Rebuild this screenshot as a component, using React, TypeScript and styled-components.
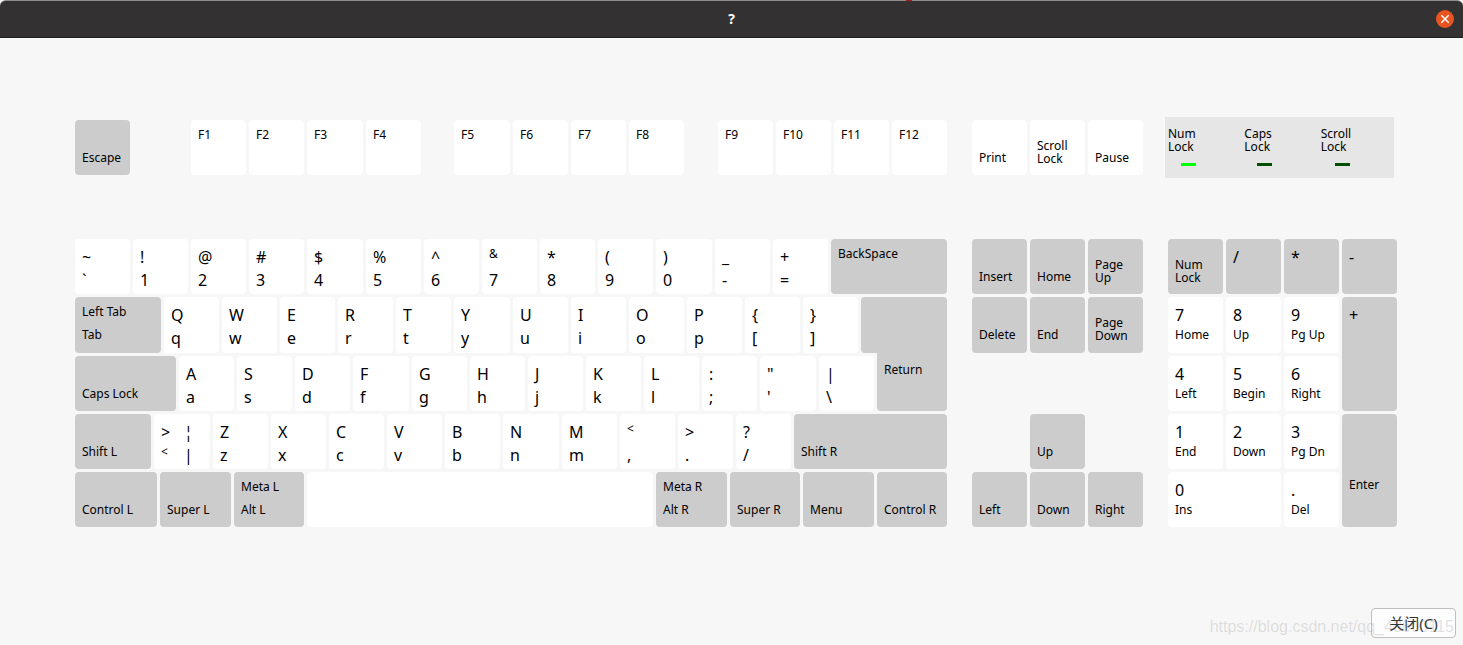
import React from "react";
import styled, { createGlobalStyle } from "styled-components";

const GlobalStyle = createGlobalStyle`
  *, *::before, *::after { box-sizing: border-box; }
  html, body, #root { height: 100%; }
  body { margin: 0; background: #f7f7f7; color: #000; font-family: "Noto Sans", "Noto Sans CJK SC", sans-serif; }
`;

type Size = "small" | "large";
type Legend = { text: string; size?: Size };
type KeyDef = {
  id: string;
  span?: number;
  tone?: "plain" | "dark";
  upper?: Legend;
  lower?: Legend;
  altUpper?: Legend;
  altLower?: Legend;
  stacked?: string;
  gap?: boolean;
  area?: string;
  deep?: boolean;
  part?: "returnTop" | "returnBottom";
};

const Window = styled.div`
  min-height: 100%;
  display: flex;
  flex-direction: column;
`;

const TitleBar = styled.header`
  position: relative;
  display: grid;
  grid-template-columns: 1fr auto 1fr;
  align-items: center;
  height: 38px;
  padding: 0 9px;
  background: #333132;
  border-top: 1px solid #8e8e8e;
  border-bottom: 1px solid #222;
  border-radius: 6px 6px 0 0;

  &::after {
    content: "";
    position: absolute;
    top: -1px;
    left: 61.9%;
    width: 6px;
    height: 1px;
    background: #a81c1c;
  }
`;

const Title = styled.h1`
  grid-column: 2;
  margin: 0;
  font-size: 14px;
  line-height: 18px;
  font-weight: 700;
  color: #fff;
`;

const CloseIcon = styled.button`
  justify-self: end;
  width: 18px;
  height: 18px;
  padding: 0;
  border: 0;
  border-radius: 50%;
  background: #e95420;

  svg { display: block; }
`;

const Board = styled.main`
  flex: 1;
  display: grid;
  grid-template-columns: 872fr 171fr 229fr;
  column-gap: 25px;
  row-gap: 61px;
  align-content: start;
  padding: 79px 66px 58px 75px;
`;

const Row = styled.div<{ $tracks: string }>`
  display: grid;
  grid-template-columns: ${(p) => p.$tracks};
  gap: 3px;
`;

const TopRow = styled(Row)`
  height: 55px;
  margin: 3px 0;
`;

const Rows = styled.div`
  display: grid;
  grid-template-rows: 55px 56px 55px 55px 55px;
  gap: 3px;
`;

const NavGrid = styled(Rows)`
  grid-template-columns: repeat(3, 1fr);
`;

const PadGrid = styled(Rows)`
  grid-template-columns: repeat(4, 1fr);
`;

const Spacer = styled.div``;

const KeyCap = styled.button<{
  $dark: boolean;
  $area?: string;
  $deep?: boolean;
  $part?: string;
}>`
  min-width: 0;
  display: grid;
  grid-template-columns: 23px auto;
  grid-template-rows: 23px 23px;
  align-content: start;
  justify-content: start;
  padding: ${(p) => (p.$deep ? 39 : 6)}px 0 0 7px;
  border: 0;
  border-radius: 4px;
  background: ${(p) => (p.$dark ? "#cccccc" : "#ffffff")};
  color: inherit;
  font-family: inherit;
  text-align: left;
  white-space: nowrap;
  ${(p) => p.$area && `grid-area: ${p.$area};`}
  ${(p) => p.$part === "returnTop" && "border-radius: 4px 4px 0 4px;"}
  ${(p) => p.$part === "returnBottom" && "border-radius: 0 0 4px 4px; margin-top: -3px; padding-top: 8px;"}
`;

const Label = styled.span<{ $size: Size; $row: number; $col: number }>`
  grid-row: ${(p) => p.$row};
  grid-column: ${(p) => p.$col};
  width: 0;
  font-size: ${(p) => (p.$size === "large" ? 16 : 12)}px;
  line-height: ${(p) => (p.$size === "large" ? 25 : 17)}px;
`;

const Stacked = styled.span`
  grid-row: 1 / 3;
  width: 0;
  padding-top: 13px;
  font-size: 12px;
  line-height: 13px;
  white-space: pre;
`;

const StatusPanel = styled.section`
  display: grid;
  grid-template-columns: repeat(3, 1fr);
  align-items: start;
  height: 61px;
  margin: 0 3px 0 -3px;
  padding-top: 10px;
  background: #e6e6e6;
`;

const Status = styled.div`
  justify-self: start;
  margin-left: 3px;
  font-size: 12px;
  line-height: 13px;
  white-space: pre;
`;

const Led = styled.div<{ $on: boolean }>`
  width: 15px;
  height: 3px;
  margin: 10px 0 0 calc(50% - 1px);
  background: ${(p) => (p.$on ? "#00ff00" : "#005000")};
`;

const Footer = styled.footer`
  position: relative;
  display: flex;
  justify-content: flex-end;
  padding: 0 7px 7px;
`;

const CloseButton = styled.button`
  width: 85px;
  height: 30px;
  padding: 0;
  border: 1px solid #bfbfbf;
  border-radius: 4px;
  background: #fdfdfd;
  color: #333;
  font-family: inherit;
  font-size: 15px;
  line-height: 24px;
`;

const Watermark = styled.span`
  position: absolute;
  right: 9px;
  bottom: 7px;
  font-family: "Liberation Sans", sans-serif;
  font-size: 16px;
  line-height: 22px;
  color: rgba(120, 120, 120, 0.22);
  pointer-events: none;
`;

const L = (text: string): Legend => ({ text, size: "large" });
const S = (text: string): Legend => ({ text, size: "small" });

const pair = (up: string, low: string, span = 55): KeyDef => ({ id: up + low, span, upper: L(up), lower: L(low) });
const fn = (name: string, span = 55): KeyDef => ({ id: name, span, upper: S(name) });
const mod = (name: string, span = 55, over?: string): KeyDef => ({
  id: name,
  span,
  tone: "dark",
  lower: S(name),
  upper: over ? S(over) : undefined,
});
const gap = (id: string, span: number): KeyDef => ({ id, span, gap: true });
const letters = (s: string, wide = ""): KeyDef[] =>
  s.split("").map((c) => pair(c, c.toLowerCase(), c === wide ? 56 : 55));

const functionRow: KeyDef[] = [
  mod("Escape"),
  gap("g1", 55),
  fn("F1"), fn("F2"), fn("F3", 56), fn("F4"),
  gap("g2", 27),
  fn("F5", 56), fn("F6"), fn("F7"), fn("F8"),
  gap("g3", 28),
  fn("F9"), fn("F10"), fn("F11"), fn("F12"),
];

const systemRow: KeyDef[] = [
  { id: "Print", lower: S("Print") },
  { id: "Scroll Lock", stacked: "Scroll\nLock" },
  { id: "Pause", lower: S("Pause") },
];

const mainRows: KeyDef[][] = [
  [
    pair("~", "`"), pair("!", "1"), pair("@", "2"), pair("#", "3"), pair("$", "4", 56),
    pair("%", "5"), pair("^", "6"),
    { id: "&7", span: 55, upper: S("&"), lower: L("7") },
    pair("*", "8"), pair("(", "9"), pair(")", "0", 56), pair("_", "-"), pair("+", "="),
    { id: "BackSpace", span: 116, tone: "dark", upper: S("BackSpace") },
  ],
  [
    mod("Tab", 86, "Left Tab"),
    ...letters("QWERTYUIOP", "Y"),
    pair("{", "["), pair("}", "]"),
    { id: "Return top", span: 86, tone: "dark", part: "returnTop" },
  ],
  [
    mod("Caps Lock", 101),
    ...letters("ASDFGHJKL", "F"),
    pair(":", ";"), pair('"', "'", 56), pair("|", "\\"),
    { id: "Return", span: 70, tone: "dark", part: "returnBottom", upper: S("Return") },
  ],
  [
    mod("Shift L", 76),
    { id: "angle", span: 56, upper: L(">"), lower: S("<"), altUpper: L("¦"), altLower: L("|") },
    ...letters("ZXCVBNM", "N"),
    { id: "comma", span: 55, upper: S("<"), lower: L(",") },
    pair(">", "."), pair("?", "/"),
    mod("Shift R", 153),
  ],
  [
    mod("Control L", 82), mod("Super L", 71), mod("Alt L", 70, "Meta L"),
    { id: "Space", span: 346 },
    mod("Alt R", 71, "Meta R"), mod("Super R", 70), mod("Menu", 71), mod("Control R", 70),
  ],
];

const at = (key: KeyDef, area: string): KeyDef => ({ ...key, area });

const navKeys: KeyDef[] = [
  at(mod("Insert"), "1 / 1"),
  at(mod("Home"), "1 / 2"),
  { id: "Page Up", tone: "dark", stacked: "Page\nUp", area: "1 / 3" },
  at(mod("Delete"), "2 / 1"),
  at(mod("End"), "2 / 2"),
  { id: "Page Down", tone: "dark", stacked: "Page\nDown", area: "2 / 3" },
  at(mod("Up"), "4 / 2"),
  at(mod("Left"), "5 / 1"),
  at(mod("Down"), "5 / 2"),
  at(mod("Right"), "5 / 3"),
];

const num = (digit: string, name: string, area: string): KeyDef => ({
  id: digit,
  upper: L(digit),
  lower: S(name),
  area,
});
const op = (sign: string, area: string): KeyDef => ({ id: sign, tone: "dark", upper: L(sign), area });

const padKeys: KeyDef[] = [
  { id: "Num Lock", tone: "dark", stacked: "Num\nLock", area: "1 / 1" },
  op("/", "1 / 2"),
  op("*", "1 / 3"),
  op("-", "1 / 4"),
  num("7", "Home", "2 / 1"),
  num("8", "Up", "2 / 2"),
  num("9", "Pg Up", "2 / 3"),
  op("+", "2 / 4 / 4 / 5"),
  num("4", "Left", "3 / 1"),
  num("5", "Begin", "3 / 2"),
  num("6", "Right", "3 / 3"),
  num("1", "End", "4 / 1"),
  num("2", "Down", "4 / 2"),
  num("3", "Pg Dn", "4 / 3"),
  { ...mod("Enter"), area: "4 / 4 / 6 / 5", deep: true },
  num("0", "Ins", "5 / 1 / 6 / 3"),
  num(".", "Del", "5 / 3"),
];

const statuses = [
  { name: "Num\nLock", on: true },
  { name: "Caps\nLock", on: false },
  { name: "Scroll\nLock", on: false },
];

function KeyLabel({ legend, row, col = 1 }: { legend?: Legend; row: number; col?: number }) {
  if (!legend) return null;
  return (
    <Label $size={legend.size ?? "small"} $row={row} $col={col}>
      {legend.text}
    </Label>
  );
}

function Key({ def }: { def: KeyDef }) {
  if (def.gap) return <Spacer />;
  return (
    <KeyCap
      type="button"
      aria-label={def.id}
      $dark={def.tone === "dark"}
      $area={def.area}
      $deep={def.deep}
      $part={def.part}
    >
      <KeyLabel legend={def.upper} row={1} />
      <KeyLabel legend={def.lower} row={2} />
      <KeyLabel legend={def.altUpper} row={1} col={2} />
      <KeyLabel legend={def.altLower} row={2} col={2} />
      {def.stacked && <Stacked>{def.stacked}</Stacked>}
    </KeyCap>
  );
}

const renderKeys = (keys: KeyDef[]) => keys.map((k) => <Key key={k.id} def={k} />);

/* Each key's span becomes its share of the row's width. */
const tracks = (keys: KeyDef[]) => keys.map((k) => `minmax(0, ${k.span ?? 55}fr)`).join(" ");

export default function App() {
  return (
    <Window>
      <GlobalStyle />
      <TitleBar>
        <Title>?</Title>
        <CloseIcon type="button" aria-label="Close">
          <svg width="18" height="18" viewBox="0 0 18 18" fill="none" stroke="#fff" strokeWidth="1.5">
            <path d="M5.3 5.3 12.7 12.7M12.7 5.3 5.3 12.7" />
          </svg>
        </CloseIcon>
      </TitleBar>
      <Board>
        <TopRow $tracks={tracks(functionRow)}>{renderKeys(functionRow)}</TopRow>
        <TopRow $tracks={tracks(systemRow)}>{renderKeys(systemRow)}</TopRow>
        <StatusPanel>
          {statuses.map((s) => (
            <Status key={s.name}>
              {s.name}
              <Led $on={s.on} />
            </Status>
          ))}
        </StatusPanel>
        <Rows>
          {mainRows.map((row, i) => (
            <Row key={i} $tracks={tracks(row)}>
              {renderKeys(row)}
            </Row>
          ))}
        </Rows>
        <NavGrid>{renderKeys(navKeys)}</NavGrid>
        <PadGrid>{renderKeys(padKeys)}</PadGrid>
      </Board>
      <Footer>
        <CloseButton type="button">关闭(C)</CloseButton>
        <Watermark>https://blog.csdn.net/qq_43600115</Watermark>
      </Footer>
    </Window>
  );
}
